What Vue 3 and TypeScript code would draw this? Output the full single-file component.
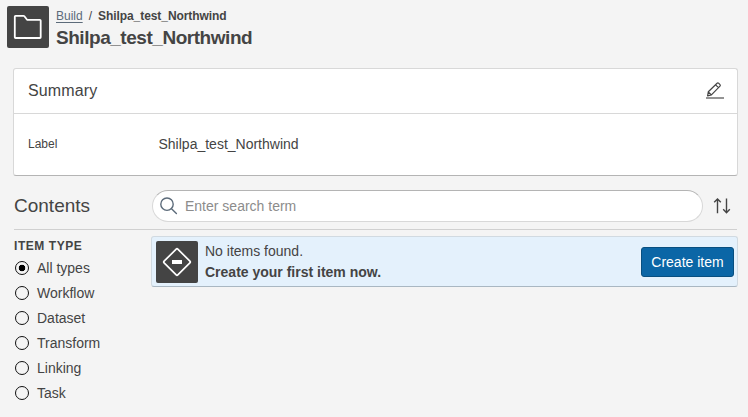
<script setup lang="ts">
import { ref } from 'vue'

const itemTypes: string[] = ['All types', 'Workflow', 'Dataset', 'Transform', 'Linking', 'Task']
const selected = ref<string>('All types')
const search = ref<string>('')
const label = 'Shilpa_test_Northwind'
</script>

<template>
  <div class="page">
    <header class="header">
      <div class="tile">
        <svg width="42" height="42" viewBox="0 0 42 42" fill="none" stroke="#fff" stroke-width="1.8" stroke-linejoin="round">
          <path d="M7.8 31.2V10.5q0-.7.7-.7h8q.5 0 .9.5l2.7 3.5h12.8q.8 0 .8.8v16.6q0 .8-.8.8H8.6q-.8 0-.8-.8z" />
        </svg>
      </div>
      <div class="heading">
        <nav class="crumbs"><a>Build</a><span class="slash">/</span><b>{{ label }}</b></nav>
        <h1>{{ label }}</h1>
      </div>
    </header>

    <section class="card">
      <div class="card-head">
        <h2>Summary</h2>
        <svg class="edit" width="20" height="20" viewBox="0 0 20 20" fill="none" stroke="#444" stroke-width="1.2" stroke-linejoin="round">
          <path d="M2.6 14.8l.7-4L12.1 2.2q.7-.7 1.5 0l1.4 1.4q.7.8 0 1.5L6.4 13.9zM10.6 3.8l2.9 2.9M3.3 10.8l3.1 3.1" />
          <path d="M1 17h18" stroke="#666" stroke-width="1.4" />
        </svg>
      </div>
      <div class="card-body">
        <span class="key">Label</span>
        <span>{{ label }}</span>
      </div>
    </section>

    <section class="contents-bar">
      <h2>Contents</h2>
      <label class="search">
        <svg width="18" height="18" viewBox="0 0 18 18" fill="none" stroke="#5c6b7a" stroke-width="1.4" stroke-linecap="round">
          <circle cx="7" cy="7.2" r="6.2" />
          <path d="M11.5 11.7l4.9 4.7" />
        </svg>
        <input v-model="search" placeholder="Enter search term" />
      </label>
      <svg class="sort" width="18" height="18" viewBox="0 0 18 18" fill="none" stroke="#444" stroke-width="1.4">
        <path d="M4.5 16.2V2M1.2 5.3l3.3-3.4 3.3 3.4M13.5 1.5v14M10.2 12.3l3.3 3.4 3.3-3.4" />
      </svg>
    </section>

    <main class="columns">
      <aside>
        <h3>ITEM TYPE</h3>
        <label v-for="type in itemTypes" :key="type" class="option">
          <input v-model="selected" type="radio" name="type" :value="type" />
          <span>{{ type }}</span>
        </label>
      </aside>
      <div class="notice">
        <div class="tile">
          <svg width="42" height="42" viewBox="0 0 42 42" fill="none">
            <path d="M20.2 8.1q.8-.8 1.6 0l12.1 12.1q.8.8 0 1.6L21.8 33.9q-.8.8-1.6 0L8.1 21.8q-.8-.8 0-1.6z" stroke="#fff" stroke-width="1.7" />
            <path d="M16 19h10v4H16z" fill="#fff" />
          </svg>
        </div>
        <div class="message">
          <div>No items found.</div>
          <b>Create your first item now.</b>
        </div>
        <button type="button">Create item</button>
      </div>
    </main>
  </div>
</template>

<style>
body {
  background: #f4f4f4;
}
</style>

<style scoped>
.page {
  box-sizing: border-box;
  width: 748px;
  height: 417px;
  padding: 6px 10px 0 7px;
  overflow: hidden;
  background: #f4f4f4;
  color: #444;
  font: 14px/20px "Liberation Sans", Arial, sans-serif;
}
h1, h2, h3 {
  margin: 0;
}
.header {
  display: flex;
  gap: 7px;
  height: 62px;
}
.tile {
  flex: none;
  width: 42px;
  height: 42px;
  border-radius: 2px;
  background: #444;
}
.tile svg {
  display: block;
}
.crumbs {
  height: 20px;
  font-size: 12px;
}
.crumbs b {
  letter-spacing: -0.07px;
}
.crumbs a {
  color: #5c6b7a;
  text-decoration: underline;
  text-underline-offset: 2px;
}
.slash {
  margin: 0 6px;
}
h1 {
  font-size: 19px;
  line-height: 23px;
  letter-spacing: -0.46px;
}
.card {
  box-sizing: border-box;
  height: 108px;
  margin-left: 6px;
  border: 1px solid #d8d8d8;
  border-bottom-color: #b4b4b4;
  border-radius: 3px;
  background: #fff;
}
.card-head {
  display: flex;
  align-items: center;
  justify-content: space-between;
  height: 44px;
  padding: 0 12px 0 14px;
  border-bottom: 1px solid #d8d8d8;
}
.card-head h2 {
  font-size: 16px;
  font-weight: 400;
  letter-spacing: 0.15px;
}
.card-body {
  display: grid;
  grid-template-columns: 130.5px 1fr;
  align-items: center;
  height: 60px;
  padding-left: 14px;
}
.key {
  font-size: 12px;
}
.contents-bar {
  display: flex;
  align-items: center;
  height: 47px;
  margin: 6px 1px 0 7px;
  border-bottom: 1px solid #d0d0d0;
}
.contents-bar h2 {
  width: 138px;
  font-size: 19px;
  font-weight: 400;
}
.search {
  box-sizing: border-box;
  display: flex;
  align-items: center;
  gap: 7px;
  width: 551px;
  height: 32px;
  padding-left: 7px;
  border: 1px solid #d8d8d8;
  border-top-color: #b4b4b4;
  border-radius: 16px;
  background: #fff;
}
.search input {
  flex: 1;
  min-width: 0;
  margin-right: 14px;
  padding: 0;
  border: 0;
  outline: 0;
  background: transparent;
  color: #444;
  font: inherit;
}
.search input::placeholder {
  color: #8c8c8c;
}
.sort {
  margin-left: 10px;
}
.columns {
  display: grid;
  grid-template-columns: 137px 1fr;
  align-items: start;
  padding: 6px 0 0 7px;
}
h3 {
  padding: 2px 0 1px;
  font-size: 12px;
  line-height: 16px;
  letter-spacing: 0.55px;
}
.option {
  display: flex;
  align-items: center;
  gap: 8px;
  height: 25px;
}
.option input {
  box-sizing: border-box;
  width: 14px;
  height: 14px;
  margin: 0 0 0 1px;
  appearance: none;
  border: 1px solid #111;
  border-radius: 50%;
}
.option input:checked {
  background: radial-gradient(circle, #000 3px, transparent 3.6px);
}
.notice {
  box-sizing: border-box;
  display: flex;
  align-items: center;
  height: 51px;
  padding: 0 3px 0 4px;
  border: 1px solid #d1dae1;
  border-bottom-color: #a9b7c2;
  border-radius: 3px;
  background: #e4f1fc;
}
.message {
  flex: 1;
  padding-left: 7px;
  line-height: 21px;
}
button {
  box-sizing: border-box;
  width: 93px;
  height: 30px;
  padding: 0;
  border: 1px solid #084f80;
  border-radius: 3px;
  background: #0b66a6;
  color: #fff;
  font: 14px "Liberation Sans", Arial, sans-serif;
}
</style>
